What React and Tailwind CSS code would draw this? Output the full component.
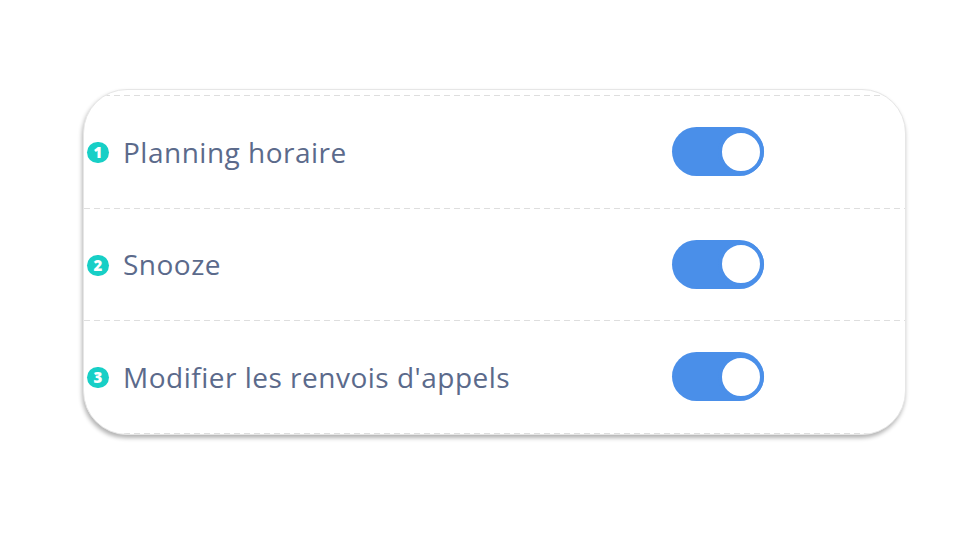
import React from "react";

const items = ["Planning horaire", "Snooze", "Modifier les renvois d'appels"];

const Dashed = () => (
  <div className="h-px w-full bg-[repeating-linear-gradient(90deg,#dedede_0_6px,transparent_6px_10px)]" />
);

const Toggle = () => (
  <div className="flex h-[49px] w-[92px] items-center justify-end rounded-full bg-[#4a8fe9]">
    <div className="h-[46px] w-[46px] rounded-full border-[4px] border-[#4a8fe9] bg-white" />
  </div>
);

export default function App() {
  return (
    <div
      className="flex h-[540px] w-[960px] items-start bg-white pl-[83px] pt-[89px]"
      style={{ fontFamily: '"Open Sans", "Liberation Sans", sans-serif' }}
    >
      <div className="w-[823px] overflow-hidden rounded-[44px] border border-[#e6e6e6] bg-white pt-[5px] shadow-[-1px_3px_4px_rgba(0,0,0,0.3)]">
        <Dashed />
        {items.map((label, i) => (
          <div key={label}>
            <div className="flex h-[111.5px] items-center">
              <div className="flex w-[39px] justify-start pl-[3px] pt-[2px]">
                <span className="flex h-[21px] w-[22px] items-center justify-center rounded-full bg-[#17cfc6] text-[15px] font-extrabold leading-none text-white">
                  {i + 1}
                </span>
              </div>
              <span className="flex-1 text-[28px] tracking-[0.5px] text-[#5b6a8b]">{label}</span>
              <div className="mr-[141px]">
                <Toggle />
              </div>
            </div>
            <Dashed />
          </div>
        ))}
      </div>
    </div>
  );
}
